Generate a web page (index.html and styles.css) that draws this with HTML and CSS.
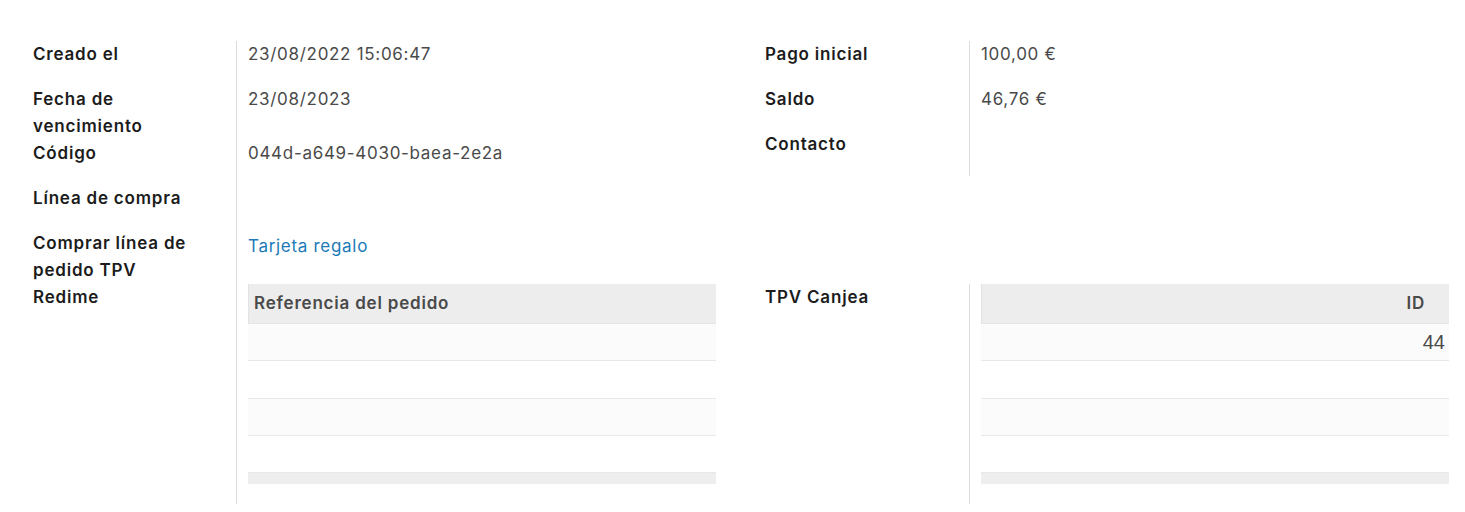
FILE: index.html
```html
<!DOCTYPE html>
<html lang="es">
<head>
<meta charset="utf-8">
<title>Tarjeta regalo</title>
<link rel="stylesheet" href="styles.css">
</head>
<body>
<div class="sheet">
  <div class="section">
    <div class="group">
      <div class="label">Creado el</div>
      <div class="value">23/08/2022 15:06:47</div>
      <div class="label">Fecha de vencimiento</div>
      <div class="value">23/08/2023</div>
      <div class="label">Código</div>
      <div class="value">044d-a649-4030-baea-2e2a</div>
      <div class="label">Línea de compra</div>
      <div class="value"></div>
      <div class="label">Comprar línea de pedido TPV</div>
      <div class="value"><a class="link" href="#">Tarjeta regalo</a></div>
    </div>
    <div class="group group-right">
      <div class="label">Pago inicial</div>
      <div class="value">100,00 €</div>
      <div class="label">Saldo</div>
      <div class="value">46,76 €</div>
      <div class="label">Contacto</div>
      <div class="value"></div>
    </div>
  </div>
  <div class="section">
    <div class="group">
      <div class="label">Redime</div>
      <div class="value tall">
        <div class="list">
          <div class="list-head"><span class="th">Referencia del pedido</span></div>
          <div class="list-row odd"></div>
          <div class="list-row"></div>
          <div class="list-row odd"></div>
          <div class="list-row"></div>
          <div class="list-foot"></div>
        </div>
      </div>
    </div>
    <div class="group group-right">
      <div class="label">TPV Canjea</div>
      <div class="value tall">
        <div class="list">
          <div class="list-head right"><span class="th th-id">ID</span></div>
          <div class="list-row odd right"><span class="td-num">44</span></div>
          <div class="list-row"></div>
          <div class="list-row odd"></div>
          <div class="list-row"></div>
          <div class="list-foot"></div>
        </div>
      </div>
    </div>
  </div>
</div>
</body>
</html>
```
FILE: styles.css
```css
* { box-sizing: border-box; }
html, body { margin: 0; padding: 0; background: #ffffff; }
body {
  font-family: Inter, "Noto Sans", "Liberation Sans", sans-serif;
  font-size: 17px;
  color: #4a4a4a;
}
.sheet {
  padding: 41px 16px 0 33px;
}
.section {
  display: flex;
  gap: 49px;
  align-items: flex-start;
}
.group {
  width: 683px;
  display: grid;
  grid-template-columns: 203px 1fr;
}
.group-right {
  grid-template-columns: 204px 1fr;
}
.label {
  font-weight: 600;
  color: #1c1c1c;
  letter-spacing: 0.8px;
  line-height: 27px;
  min-height: 45px;
  padding-right: 20px;
}
.value {
  border-left: 1px solid #dcdcdc;
  padding-left: 11px;
  line-height: 27px;
  min-height: 45px;
  color: #4a4a4a;
  letter-spacing: 0.7px;
}
.value.tall {
  padding-bottom: 20px;
}
.link {
  color: #1b7ab7;
  text-decoration: none;
  display: inline-block;
  padding-top: 3px;
}
.list {
  width: 468px;
}
.list-head {
  height: 40px;
  background: #ededed;
  border-left: 1px solid #e2e2e2;
  border-bottom: 1px solid #e6e6e6;
  display: flex;
  align-items: center;
  padding-left: 5px;
}
.th {
  font-weight: 600;
  color: #4a4a4a;
  letter-spacing: 0.8px;
}
.right { justify-content: flex-end; }
.th-id { padding-right: 24px; }
.list-row {
  height: 37.25px;
  border-bottom: 1px solid #e8e8e8;
  display: flex;
  align-items: center;
  background: #ffffff;
}
.list-row.odd { background: #fbfbfb; }
.td-num {
  padding-right: 4px;
  font-family: "Liberation Sans", Arial, sans-serif;
  font-size: 20px;
  letter-spacing: 0;
  color: #4a4a4a;
}
.list-foot {
  height: 11px;
  background: #eeeeee;
}
```
